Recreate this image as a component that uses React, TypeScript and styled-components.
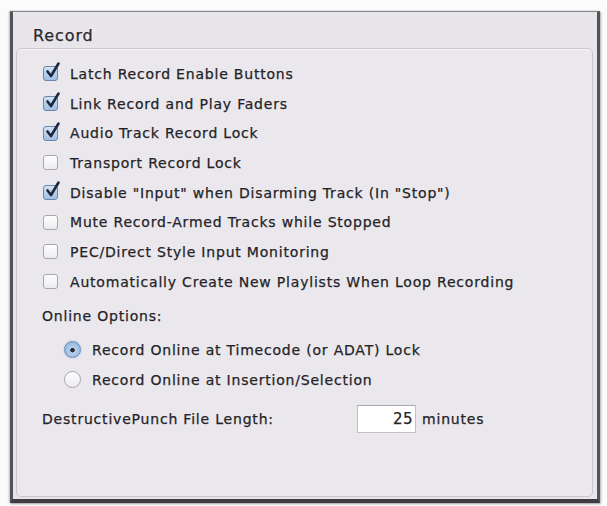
import React from "react";
import styled, { createGlobalStyle } from "styled-components";

const Global = createGlobalStyle`
  html, body { margin: 0; padding: 0; background: #fbfbfc; }
  body { font-family: "DejaVu Sans", "Liberation Sans", sans-serif; }
`;

const Page = styled.div`
  width: 607px;
  height: 506px;
  padding: 11px 0 0 10px;
  box-sizing: border-box;
`;

const Window = styled.div`
  width: 590px;
  height: 492px;
  box-sizing: border-box;
  background: #e9e6eb;
  border-top: 1px solid #8a878e;
  border-left: 3px solid #55525a;
  border-right: 3px solid #55525a;
  border-bottom: 4px solid #3f3c44;
  box-shadow: -1px 0 2px rgba(0,0,0,0.25), 1px 1px 2px rgba(0,0,0,0.3);
  padding: 0 4px 2px 3px;
  display: flex;
  flex-direction: column;
`;

const Title = styled.div`
  height: 36px;
  box-sizing: border-box;
  padding: 13px 0 0 17px;
  font-size: 16px;
  letter-spacing: 0.9px;
  color: #2a292d;
  line-height: 22px;
  -webkit-text-stroke: 0.25px #2a292d;
`;

const Group = styled.div`
  flex: 1;
  border: 1px solid #c9c6cc;
  border-radius: 5px;
  background: #ebe8ed;
  box-shadow: inset 0 1px 0 #f7f6f8;
  padding: 10px 0 0 25px;
  display: flex;
  flex-direction: column;
  font-size: 14px;
  letter-spacing: 0.8px;
  color: #242327;
  -webkit-text-stroke: 0.25px #242327;
`;

const Row = styled.label`
  height: 29.7px;
  display: flex;
  align-items: center;
  gap: 12px;
  white-space: nowrap;
`;

const Box = styled.span<{ $on?: boolean }>`
  position: relative;
  width: 15px;
  height: 15px;
  flex: none;
  box-sizing: border-box;
  border-radius: 3px;
  border: 1px solid ${(p) => (p.$on ? "#6d86a8" : "#a9a7ad")};
  background: ${(p) =>
    p.$on
      ? "linear-gradient(#d3e3f4, #9fbfe3)"
      : "linear-gradient(#ffffff, #ecebee)"};
  margin-left: 1px;
`;

const Check = styled.svg`
  position: absolute;
  left: 1px;
  top: -5px;
  width: 16px;
  height: 18px;
  overflow: visible;
`;

const Section = styled.div`
  height: 33px;
  display: flex;
  align-items: flex-end;
  padding-bottom: 6px;
  box-sizing: border-box;
  white-space: nowrap;
`;

const RadioList = styled.div`
  padding: 5px 0 0 22px;
  display: flex;
  flex-direction: column;
`;

const RadioRow = styled.label`
  height: 30px;
  display: flex;
  align-items: center;
  gap: 11px;
  white-space: nowrap;
`;

const Radio = styled.span<{ $on?: boolean }>`
  width: 17px;
  height: 17px;
  flex: none;
  box-sizing: border-box;
  border-radius: 50%;
  border: 1px solid ${(p) => (p.$on ? "#6f8fb6" : "#a8a6ac")};
  background: ${(p) =>
    p.$on
      ? "radial-gradient(circle at 50% 55%, #2a2f3a 0 2px, #b9d2ee 2.5px, #7fa8d8 100%)"
      : "linear-gradient(#ffffff, #eceaee)"};
  box-shadow: ${(p) => (p.$on ? "0 0 2px rgba(90,140,200,0.5)" : "none")};
`;

const LengthRow = styled.div`
  margin-top: 9px;
  height: 30px;
  display: flex;
  align-items: center;
  white-space: nowrap;
`;

const LengthLabel = styled.span`
  width: 315px;
`;

const Field = styled.span`
  width: 59px;
  height: 28px;
  box-sizing: border-box;
  border: 1px solid #c3c1c6;
  border-top-color: #a9a7ad;
  background: #fff;
  text-align: right;
  padding: 0 2px;
  line-height: 26px;
  font-size: 15px;
  letter-spacing: 0.5px;
  margin-right: 6px;
`;

const options: [string, boolean][] = [
  ["Latch Record Enable Buttons", true],
  ["Link Record and Play Faders", true],
  ["Audio Track Record Lock", true],
  ["Transport Record Lock", false],
  ['Disable "Input" when Disarming Track (In "Stop")', true],
  ["Mute Record-Armed Tracks while Stopped", false],
  ["PEC/Direct Style Input Monitoring", false],
  ["Automatically Create New Playlists When Loop Recording", false],
];

export default function App() {
  return (
    <>
      <Global />
      <Page>
        <Window>
          <Title>Record</Title>
          <Group>
            {options.map(([text, on]) => (
              <Row key={text}>
                <Box $on={on}>
                  {on && (
                    <Check viewBox="0 0 16 18">
                      <path
                        d="M2.5 9.5 L6 14 L13.5 1.5"
                        fill="none"
                        stroke="#1c2740"
                        strokeWidth="2.6"
                        strokeLinecap="round"
                        strokeLinejoin="round"
                      />
                    </Check>
                  )}
                </Box>
                {text}
              </Row>
            ))}
            <Section>Online Options:</Section>
            <RadioList>
              <RadioRow>
                <Radio $on />
                Record Online at Timecode (or ADAT) Lock
              </RadioRow>
              <RadioRow>
                <Radio />
                Record Online at Insertion/Selection
              </RadioRow>
            </RadioList>
            <LengthRow>
              <LengthLabel>DestructivePunch File Length:</LengthLabel>
              <Field>25</Field>
              minutes
            </LengthRow>
          </Group>
        </Window>
      </Page>
    </>
  );
}
